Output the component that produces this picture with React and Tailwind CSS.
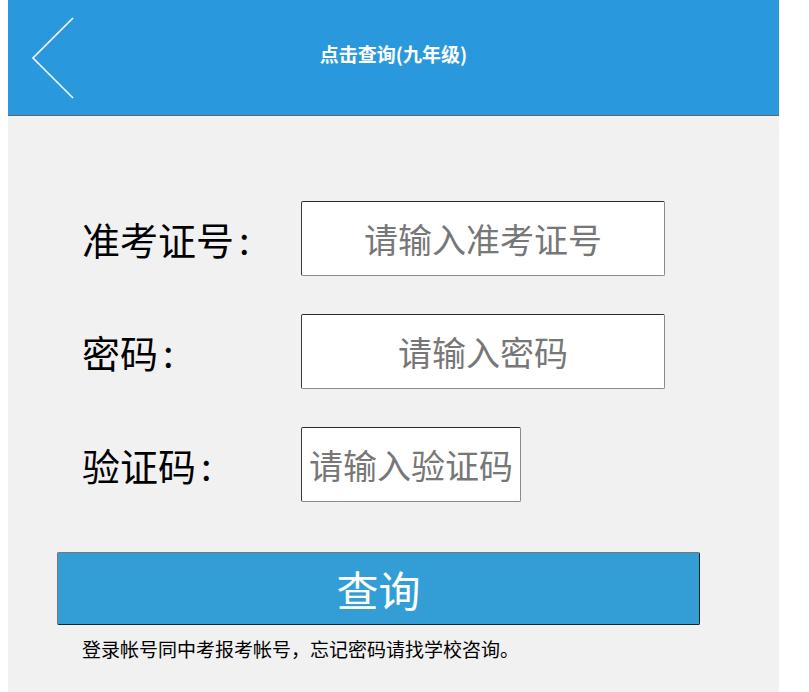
import { useState } from 'react'

const FONT = "font-['Microsoft_YaHei','Noto_Sans_CJK_SC','Noto_Sans',sans-serif]"

const FIELD = ({ label, children }) => (
  <div className="flex items-center">
    <label className="w-[219px] shrink-0 text-[38px] leading-none text-black">
      {label}
      <span className="ml-[5px]">:</span>
    </label>
    {children}
  </div>
)

const inputCls =
  'h-[75px] rounded-[2px] border border-t-[#2b2b2b] border-l-[#3a3a3a] border-r-[#8a8a8a] border-b-[#8a8a8a] bg-white px-1 text-center text-[34px] text-[#333] outline-none placeholder:text-[#777]'

export default function App() {
  const [form, setForm] = useState({ ticket: '', password: '', code: '' })
  const set = (field) => (e) => setForm((prev) => ({ ...prev, [field]: e.target.value }))

  return (
    <div className={`min-h-[692px] w-[809px] bg-white ${FONT}`}>
      <div className="ml-2 min-h-[692px] w-[771px] bg-[#f1f1f1]">
        {/* Header */}
        <header className="relative flex h-[116px] items-center justify-center border-b border-[#666] bg-[#2a98dc] pb-[6px]">
          <button className="absolute left-0 top-0 h-[115px] w-[80px]" aria-label="返回">
            <svg width="80" height="115" viewBox="0 0 80 115" fill="none">
              <polyline points="65,18 25,58 65,98" stroke="#fff" strokeWidth="1.6" />
            </svg>
          </button>
          <h1 className="text-[19px] font-bold text-white">点击查询(九年级)</h1>
        </header>

        {/* Form */}
        <form className="pl-[74px] pt-[85px]" onSubmit={(e) => e.preventDefault()}>
          <div className="flex flex-col gap-[38px]">
            <FIELD label="准考证号">
              <input
                type="text"
                value={form.ticket}
                onChange={set('ticket')}
                placeholder="请输入准考证号"
                className={`w-[364px] ${inputCls}`}
              />
            </FIELD>
            <FIELD label="密码">
              <input
                type="password"
                value={form.password}
                onChange={set('password')}
                placeholder="请输入密码"
                className={`w-[364px] ${inputCls}`}
              />
            </FIELD>
            <FIELD label="验证码">
              <input
                type="text"
                value={form.code}
                onChange={set('code')}
                placeholder="请输入验证码"
                className={`w-[220px] ${inputCls}`}
              />
            </FIELD>
          </div>
        </form>

        <div className="pl-[49px] pt-[50px]">
          <button
            type="button"
            className="flex h-[73px] w-[643px] items-center justify-center rounded-[2px] border border-t-[#777] border-l-[#777] border-r-[#222] border-b-[#222] bg-[#339ed6] text-[42px] text-white"
          >
            查询
          </button>
          <p className="mt-[10px] pl-[25px] text-[19px] leading-[27px] text-black">
            登录帐号同中考报考帐号，忘记密码请找学校咨询。
          </p>
        </div>
      </div>
    </div>
  )
}
